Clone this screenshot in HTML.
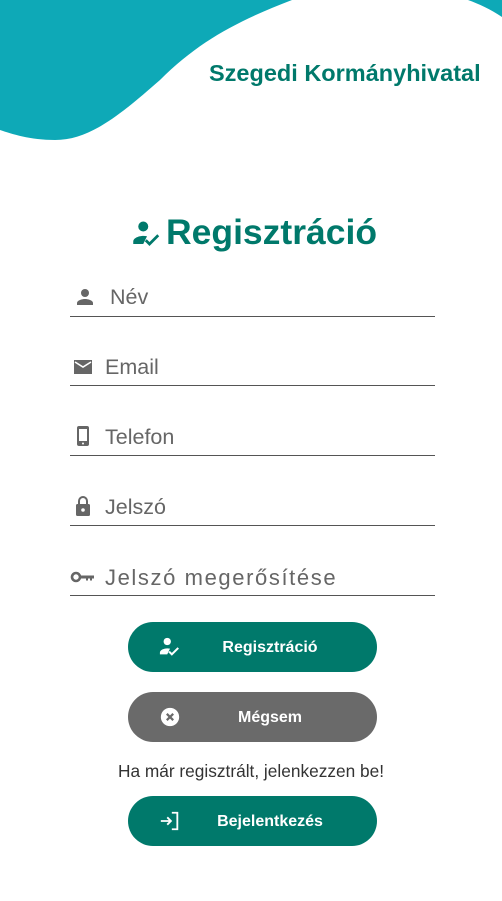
<!DOCTYPE html>
<html><head><meta charset="utf-8"><style>
body{margin:0;width:502px;height:901px;background:#fff;position:relative;overflow:hidden;font-family:"Liberation Sans",sans-serif}
.abs{position:absolute}
.field{position:absolute;left:70px;width:365px;height:1px;background:#555}
.lbl{position:absolute;font-size:21.5px;color:#666}
.btn{position:absolute;left:128px;width:249px;height:50px;border-radius:25px;color:#fff;font-weight:bold;font-size:16px}
.btn span{position:absolute;left:0;right:0;text-align:center;top:17px;padding-left:35px;box-sizing:border-box}
.btn svg{position:absolute;left:31px;top:14px}
</style></head><body>
<svg class="abs" style="left:0;top:0" width="502" height="160">
<path d="M0 0 H292 C240 20 200 40 160 80 C120 115 90 140 55 140 C30 140 12 134 0 130 Z" fill="#0ea9b7"/>
<path d="M468 0 H502 V17 C490 9 479 4 468 0 Z" fill="#0ea9b7"/>
</svg>
<div class="abs" style="left:209px;top:60px;font-size:23.5px;font-weight:bold;color:#00796b;white-space:nowrap">Szegedi Kormányhivatal</div>
<svg class="abs" style="left:130px;top:219px" width="34" height="30" viewBox="0 0 24 24"><circle cx="9" cy="6" r="4" fill="#00796b"/><path d="M1 20v-2c0-3 5-4.5 8-4.5 1 0 2 .1 3 .3L9 20Z" fill="#00796b"/><path d="M11 17l3 3 7-7" stroke="#00796b" stroke-width="2.2" fill="none"/></svg>
<div class="abs" style="left:166px;top:212px;font-size:35.5px;font-weight:bold;color:#00796b">Regisztráció</div>

<svg class="abs" style="left:73px;top:285px" width="24" height="24" viewBox="0 0 24 24"><circle cx="12" cy="8" r="4" fill="#666"/><path d="M4 20v-2c0-2.7 5.3-4 8-4s8 1.3 8 4v2Z" fill="#666"/></svg>
<div class="lbl" style="left:110px;top:285px">Név</div><div class="field" style="top:316px"></div>

<svg class="abs" style="left:71px;top:355px" width="24" height="24" viewBox="0 0 24 24"><path d="M3 5h18v14H3Z" fill="#666"/><path d="M4 7l8 5 8-5" stroke="#fff" stroke-width="1.6" fill="none"/></svg>
<div class="lbl" style="left:105px;top:355px">Email</div><div class="field" style="top:385px"></div>

<svg class="abs" style="left:71px;top:424px" width="24" height="24" viewBox="0 0 24 24"><rect x="6" y="2" width="12" height="20" rx="2" fill="#666"/><rect x="8" y="5" width="8" height="12" fill="#fff"/><circle cx="12" cy="19.5" r="1" fill="#fff"/></svg>
<div class="lbl" style="left:105px;top:425px">Telefon</div><div class="field" style="top:455px"></div>

<svg class="abs" style="left:71px;top:494px" width="24" height="24" viewBox="0 0 24 24"><path d="M8 10V7a4 4 0 0 1 8 0v3" stroke="#666" stroke-width="2" fill="none"/><rect x="5" y="10" width="14" height="12" rx="1.5" fill="#666"/><circle cx="12" cy="16" r="1.8" fill="#fff"/></svg>
<div class="lbl" style="left:105px;top:495px">Jelszó</div><div class="field" style="top:525px"></div>

<svg class="abs" style="left:70px;top:565px" width="26" height="24" viewBox="0 0 26 24"><circle cx="6" cy="12" r="4" stroke="#666" stroke-width="2.6" fill="none"/><path d="M10 10.5h14v3h-2v2h-2v-2h-2v2h-2v-2h-6Z" fill="#666"/></svg>
<div class="lbl" style="left:105px;top:565px;font-size:22px;letter-spacing:1.6px">Jelszó megerősítése</div><div class="field" style="top:595px"></div>

<div class="btn" style="top:622px;background:#00796b"><svg width="22" height="22" viewBox="0 0 24 24"><circle cx="9" cy="6" r="4" fill="#fff"/><path d="M1 20v-2c0-3 5-4.5 8-4.5 1 0 2 .1 3 .3L9 20Z" fill="#fff"/><path d="M11 17l3 3 7-7" stroke="#fff" stroke-width="2.2" fill="none"/></svg><span>Regisztráció</span></div>
<div class="btn" style="top:692px;background:#6a6a6a"><svg width="22" height="22" viewBox="0 0 24 24"><circle cx="12" cy="12" r="10" fill="#fff"/><path d="M8.5 8.5l7 7M15.5 8.5l-7 7" stroke="#6a6a6a" stroke-width="2.4"/></svg><span>Mégsem</span></div>
<div class="abs" style="left:0;width:502px;text-align:center;top:761px;font-size:17.3px;color:#333">Ha már regisztrált, jelenkezzen be!</div>
<div class="btn" style="top:796px;background:#00796b"><svg width="22" height="22" viewBox="0 0 24 24"><path d="M2 12h11M9 8l4 4-4 4M14 3h6v18h-6" stroke="#fff" stroke-width="2" fill="none"/></svg><span>Bejelentkezés</span></div>
</body></html>
